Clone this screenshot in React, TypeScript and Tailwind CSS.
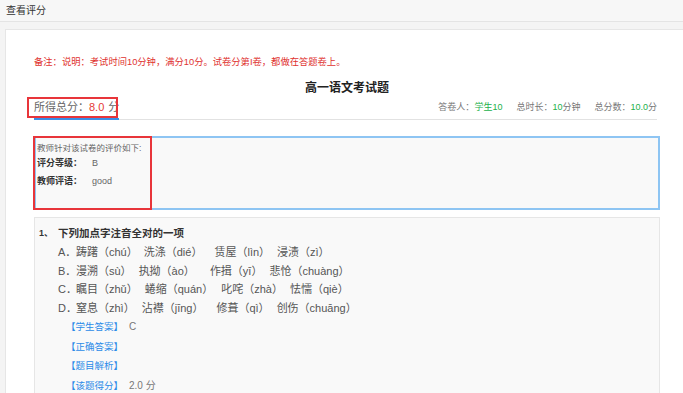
const options = [
  {
    label: "A．",
    items: [
      ["踌躇（chú）", "mr-[6px]"],
      ["洗涤（dié）", "mr-[12px]"],
      ["赁屋（lìn）", "mr-[7px]"],
      ["浸渍（zì）", ""],
    ],
  },
  {
    label: "B．",
    items: [
      ["漫溯（sù）", "mr-[7px]"],
      ["执拗（ào）", "mr-[15px]"],
      ["作揖（yī）", "mr-[7px]"],
      ["悲怆（chuàng）", ""],
    ],
  },
  {
    label: "C．",
    items: [
      ["瞩目（zhǔ）", "mr-[7px]"],
      ["蜷缩（quán）", "mr-[8px]"],
      ["叱咤（zhà）", "mr-[7px]"],
      ["怯懦（qiè）", ""],
    ],
  },
  {
    label: "D．",
    items: [
      ["窒息（zhì）", "mr-[7px]"],
      ["沾襟（jīng）", "mr-[13px]"],
      ["修葺（qì）", "mr-[7px]"],
      ["创伤（chuāng）", ""],
    ],
  },
];

const answers = [
  { label: "【学生答案】", value: "C" },
  { label: "【正确答案】", value: "" },
  { label: "【题目解析】", value: "" },
  { label: "【该题得分】", value: "2.0 分" },
];

export default function App() {
  return (
    <div className="w-[683px] h-[393px] overflow-hidden bg-[#f4f4f4] font-['Liberation_Sans','Noto_Sans_CJK_SC',sans-serif]">
      {/* top bar */}
      <div className="h-[22px] border-b border-[#e4e4e4] bg-[#f7f7f7] flex items-center px-[6px] text-[10px] text-[#333]">
        查看评分
      </div>

      {/* card */}
      <div className="mt-[7px] ml-[5px] w-[681px] h-[400px] bg-white border border-[#e6e6e6] pl-[28px]">
        <div className="w-[626px]">
          {/* note */}
          <div className="mt-[26px] h-[12px] leading-[12px] text-[9.3px] text-[#e0322f] whitespace-nowrap">
            备注：说明：考试时间10分钟，满分10分。试卷分第I卷，都做在答题卷上。
          </div>

          {/* title */}
          <div className="mt-[11px] h-[18px] leading-[18px] text-center text-[12px] font-bold text-[#222]">
            高一语文考试题
          </div>

          {/* score row */}
          <div className="h-[23px] mr-[3px] border-b border-[#e2e2e2] flex justify-between">
            <div className="relative h-[23px] -mb-px border-b-2 border-[#3a8ee6] flex items-center text-[11px] text-[#666] whitespace-nowrap">
              <span>所得总分：</span>
              <span className="text-[#e53935]">8.0</span>
              <span className="ml-[4px]">分</span>
              <div className="absolute left-[-7px] top-0 w-[91px] h-[21px] border-2 border-[#e8353a]" />
            </div>
            <div className="flex items-center gap-[14px] text-[9px] text-[#777] whitespace-nowrap">
              <span>
                答卷人：<span className="text-[#22b14c]">学生10</span>
              </span>
              <span>
                总时长：<span className="text-[#22b14c]">10</span>分钟
              </span>
              <span>
                总分数：<span className="text-[#22b14c]">10.0</span>分
              </span>
            </div>
          </div>

          {/* teacher comment */}
          <div className="relative mt-[16px] h-[74px] border-2 border-[#8ec5f3] bg-[#f9f9f9] pt-[3px] pl-px">
            <div className="h-[14px] leading-[14px] text-[8.5px] text-[#666]">
              教师针对该试卷的评价如下:
            </div>
            <div className="h-[18px] flex items-center text-[9px]">
              <span className="w-[55px] font-bold text-[#333]">评分等级：</span>
              <span className="text-[#666]">B</span>
            </div>
            <div className="h-[18px] flex items-center text-[9px]">
              <span className="w-[55px] font-bold text-[#333]">教师评语：</span>
              <span className="text-[#666]">good</span>
            </div>
            <div className="absolute left-[-3px] top-[-2px] w-[119px] h-[74px] border-2 border-[#e8353a]" />
          </div>

          {/* question */}
          <div className="mt-[7px] h-[200px] border border-[#e6e6e6] bg-[#f9f9f9] pt-[6px] pl-[4px]">
            <div className="h-[19px] flex items-center font-bold text-[#333]">
              <span className="w-[19px] text-[9px]">1、</span>
              <span className="text-[10.5px]">下列加点字注音全对的一项</span>
            </div>
            <div className="pl-[19px] text-[11px] text-[#555] leading-[18.5px] whitespace-nowrap">
              {options.map((o) => (
                <div key={o.label} className="flex">
                  <span className="w-[18px]">{o.label}</span>
                  {o.items.map(([t, m]) => (
                    <span key={t} className={m}>
                      {t}
                    </span>
                  ))}
                </div>
              ))}
            </div>
            <div className="pl-[27px] leading-[19.5px] whitespace-nowrap">
              {answers.map((a) => (
                <div key={a.label} className="flex items-center">
                  <span className="w-[63px] text-[9.5px] text-[#2b8be8]">{a.label}</span>
                  <span className="text-[10px] text-[#777]">{a.value}</span>
                </div>
              ))}
            </div>
          </div>
        </div>
      </div>
    </div>
  );
}
